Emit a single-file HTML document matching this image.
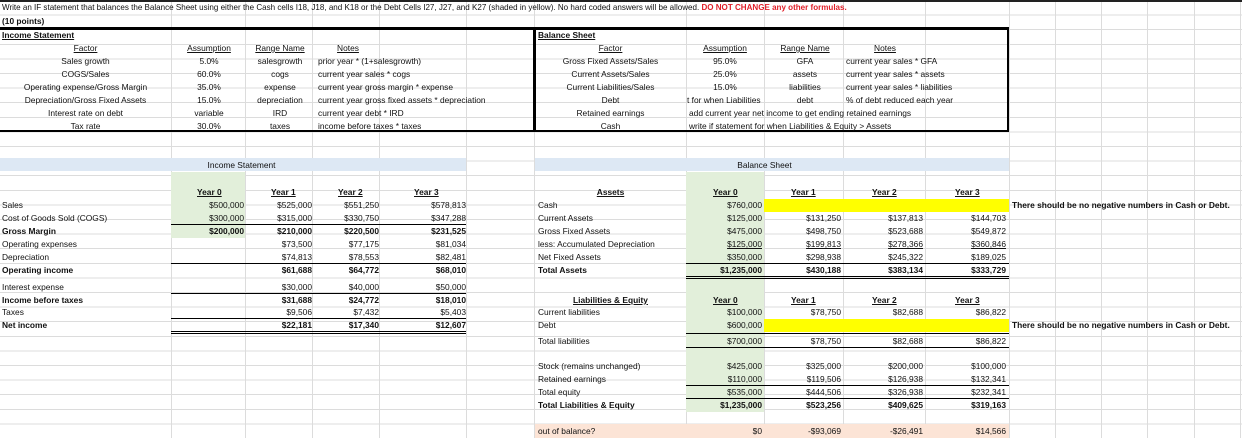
<!DOCTYPE html>
<html><head><meta charset="utf-8"><style>
*{margin:0;padding:0;box-sizing:border-box}
body{width:1242px;height:438px;overflow:hidden;background:#fff;position:relative;font-family:"Liberation Sans",Arial,sans-serif;font-size:8.4px;color:#111}
#grid{position:absolute;left:0;top:0;width:1242px;height:438px;background:repeating-linear-gradient(to bottom,transparent 0,transparent 13.6px,#dcdcdc 13.6px,#dcdcdc 14.6px);background-position:0 1px}
.v{position:absolute;top:0;height:438px;width:1px;background:#dcdcdc}
.t,.r,.c{position:absolute;line-height:12px;white-space:nowrap}
.r{text-align:right}
.c{text-align:center}
.u{text-decoration:underline}
.b{font-weight:bold}
.h{position:absolute;height:1px;background:#000}
.box{position:absolute;border:2px solid #000}
.fill{position:absolute}
</style></head><body>
<div id="grid"></div>
<div class="v" style="left:171px"></div><div class="v" style="left:245px"></div><div class="v" style="left:312px"></div><div class="v" style="left:379px"></div><div class="v" style="left:466px"></div><div class="v" style="left:534px"></div><div class="v" style="left:686px"></div><div class="v" style="left:764px"></div><div class="v" style="left:843px"></div><div class="v" style="left:925px"></div><div class="v" style="left:1009px"></div><div class="v" style="left:1055px"></div><div class="v" style="left:1101px"></div><div class="v" style="left:1147px"></div><div class="v" style="left:1194px"></div><div class="v" style="left:1240px"></div>

<div class="fill" style="left:0;top:0;width:1242px;height:2px;background:#222"></div>
<div class="fill" style="left:0;top:158px;width:466px;height:13px;background:#dde8f4"></div>
<div class="fill" style="left:535px;top:158px;width:474px;height:13px;background:#dde8f4"></div>
<div class="fill" style="left:171px;top:172px;width:74px;height:66px;background:#e2efda"></div>
<div class="fill" style="left:686px;top:172px;width:78px;height:240px;background:#e2efda"></div>
<div class="fill" style="left:764px;top:199px;width:245px;height:13px;background:#ffff00"></div>
<div class="fill" style="left:764px;top:319px;width:245px;height:13px;background:#ffff00"></div>
<div class="fill" style="left:535px;top:424px;width:474px;height:14px;background:#fce4d6"></div>

<div class="h" style="left:0;top:27px;width:1009px;height:2px"></div>
<div class="box" style="left:-2px;top:28px;width:537px;height:104px;border-left:none"></div>
<div class="box" style="left:534px;top:28px;width:475px;height:104px"></div>

<div class="t" style="left:2px;top:2px;font-size:8.05px">Write an IF statement that balances the Balance Sheet using either the Cash cells I18, J18, and K18 or the Debt Cells I27, J27, and K27 (shaded in yellow). No hard coded answers will be allowed. <span class="b" style="color:#e0202a">DO NOT CHANGE any other formulas.</span></div>
<div class="t b" style="left:2px;top:15px">(10 points)</div>
<div class="t b u" style="left:2px;top:29px">Income Statement</div>
<div class="c u" style="left:0;width:171px;top:42px">Factor</div>
<div class="c u" style="left:171px;width:76px;top:42px">Assumption</div>
<div class="c u" style="left:245px;width:70px;top:42px">Range Name</div>
<div class="c u" style="left:318px;width:60px;top:42px">Notes</div>
<div class="c" style="left:0;width:171px;top:55px">Sales growth</div>
<div class="c" style="left:0;width:171px;top:68px">COGS/Sales</div>
<div class="c" style="left:0;width:171px;top:81px">Operating expense/Gross Margin</div>
<div class="c" style="left:0;width:171px;top:94px">Depreciation/Gross Fixed Assets</div>
<div class="c" style="left:0;width:171px;top:107px">Interest rate on debt</div>
<div class="c" style="left:0;width:171px;top:120px">Tax rate</div>
<div class="c" style="left:171px;width:76px;top:55px">5.0%</div>
<div class="c" style="left:171px;width:76px;top:68px">60.0%</div>
<div class="c" style="left:171px;width:76px;top:81px">35.0%</div>
<div class="c" style="left:171px;width:76px;top:94px">15.0%</div>
<div class="c" style="left:171px;width:76px;top:107px">variable</div>
<div class="c" style="left:171px;width:76px;top:120px">30.0%</div>
<div class="c" style="left:245px;width:70px;top:55px">salesgrowth</div>
<div class="c" style="left:245px;width:70px;top:68px">cogs</div>
<div class="c" style="left:245px;width:70px;top:81px">expense</div>
<div class="c" style="left:245px;width:70px;top:94px">depreciation</div>
<div class="c" style="left:245px;width:70px;top:107px">IRD</div>
<div class="c" style="left:245px;width:70px;top:120px">taxes</div>
<div class="t" style="left:318px;top:55px">prior year * (1+salesgrowth)</div>
<div class="t" style="left:318px;top:68px">current year sales * cogs</div>
<div class="t" style="left:318px;top:81px">current year gross margin * expense</div>
<div class="t" style="left:318px;top:94px">current year gross fixed assets * depreciation</div>
<div class="t" style="left:318px;top:107px">current year debt * IRD</div>
<div class="t" style="left:318px;top:120px">income before taxes * taxes</div>

<div class="t b u" style="left:538px;top:29px">Balance Sheet</div>
<div class="c u" style="left:535px;width:151px;top:42px">Factor</div>
<div class="c u" style="left:686px;width:78px;top:42px">Assumption</div>
<div class="c u" style="left:764px;width:82px;top:42px">Range Name</div>
<div class="c u" style="left:846px;width:78px;top:42px">Notes</div>
<div class="c" style="left:535px;width:151px;top:55px">Gross Fixed Assets/Sales</div>
<div class="c" style="left:535px;width:151px;top:68px">Current Assets/Sales</div>
<div class="c" style="left:535px;width:151px;top:81px">Current Liabilities/Sales</div>
<div class="c" style="left:535px;width:151px;top:94px">Debt</div>
<div class="c" style="left:535px;width:151px;top:107px">Retained earnings</div>
<div class="c" style="left:535px;width:151px;top:120px">Cash</div>
<div class="c" style="left:686px;width:78px;top:55px">95.0%</div>
<div class="c" style="left:686px;width:78px;top:68px">25.0%</div>
<div class="c" style="left:686px;width:78px;top:81px">15.0%</div>
<div class="t" style="left:687px;top:94px;width:76px;overflow:hidden">t for when Liabilities &amp;</div>
<div class="c" style="left:764px;width:82px;top:55px">GFA</div>
<div class="c" style="left:764px;width:82px;top:68px">assets</div>
<div class="c" style="left:764px;width:82px;top:81px">liabilities</div>
<div class="c" style="left:764px;width:82px;top:94px">debt</div>
<div class="t" style="left:846px;top:55px">current year sales * GFA</div>
<div class="t" style="left:846px;top:68px">current year sales * assets</div>
<div class="t" style="left:846px;top:81px">current year sales * liabilities</div>
<div class="t" style="left:846px;top:94px">% of debt reduced each year</div>
<div class="t" style="left:689px;top:107px">add current year net income to get ending retained earnings</div>
<div class="t" style="left:689px;top:120px">write if statement for when Liabilities &amp; Equity &gt; Assets</div>

<div class="c" style="left:171px;width:141px;top:159px">Income Statement</div>
<div class="t b u" style="left:197px;top:186px">Year 0</div>
<div class="t b u" style="left:271px;top:186px">Year 1</div>
<div class="t b u" style="left:338px;top:186px">Year 2</div>
<div class="t b u" style="left:414px;top:186px">Year 3</div>
<div class="t" style="left:2px;top:199px">Sales</div>
<div class="t" style="left:2px;top:212px">Cost of Goods Sold (COGS)</div>
<div class="t b" style="left:2px;top:225px">Gross Margin</div>
<div class="t" style="left:2px;top:238px">Operating expenses</div>
<div class="t" style="left:2px;top:251px">Depreciation</div>
<div class="t b" style="left:2px;top:264px">Operating income</div>
<div class="t" style="left:2px;top:281px">Interest expense</div>
<div class="t b" style="left:2px;top:294px">Income before taxes</div>
<div class="t" style="left:2px;top:306px">Taxes</div>
<div class="t b" style="left:2px;top:319px">Net income</div>

<div class="r" style="right:998px;top:199px">$500,000</div>
<div class="r" style="right:998px;top:212px">$300,000</div>
<div class="r b" style="right:998px;top:225px">$200,000</div>

<div class="r" style="right:930px;top:199px">$525,000</div>
<div class="r" style="right:930px;top:212px">$315,000</div>
<div class="r b" style="right:930px;top:225px">$210,000</div>
<div class="r" style="right:930px;top:238px">$73,500</div>
<div class="r" style="right:930px;top:251px">$74,813</div>
<div class="r b" style="right:930px;top:264px">$61,688</div>
<div class="r" style="right:930px;top:281px">$30,000</div>
<div class="r b" style="right:930px;top:294px">$31,688</div>
<div class="r" style="right:930px;top:306px">$9,506</div>
<div class="r b" style="right:930px;top:319px">$22,181</div>

<div class="r" style="right:863px;top:199px">$551,250</div>
<div class="r" style="right:863px;top:212px">$330,750</div>
<div class="r b" style="right:863px;top:225px">$220,500</div>
<div class="r" style="right:863px;top:238px">$77,175</div>
<div class="r" style="right:863px;top:251px">$78,553</div>
<div class="r b" style="right:863px;top:264px">$64,772</div>
<div class="r" style="right:863px;top:281px">$40,000</div>
<div class="r b" style="right:863px;top:294px">$24,772</div>
<div class="r" style="right:863px;top:306px">$7,432</div>
<div class="r b" style="right:863px;top:319px">$17,340</div>

<div class="r" style="right:776px;top:199px">$578,813</div>
<div class="r" style="right:776px;top:212px">$347,288</div>
<div class="r b" style="right:776px;top:225px">$231,525</div>
<div class="r" style="right:776px;top:238px">$81,034</div>
<div class="r" style="right:776px;top:251px">$82,481</div>
<div class="r b" style="right:776px;top:264px">$68,010</div>
<div class="r" style="right:776px;top:281px">$50,000</div>
<div class="r b" style="right:776px;top:294px">$18,010</div>
<div class="r" style="right:776px;top:306px">$5,403</div>
<div class="r b" style="right:776px;top:319px">$12,607</div>

<div class="h" style="left:171px;top:224px;width:295px"></div>
<div class="h" style="left:171px;top:263px;width:295px"></div>
<div class="h" style="left:171px;top:293px;width:295px"></div>
<div class="h" style="left:171px;top:318px;width:295px"></div>
<div class="h" style="left:171px;top:331px;width:295px"></div>
<div class="h" style="left:171px;top:333px;width:295px"></div>

<div class="c" style="left:686px;width:157px;top:159px">Balance Sheet</div>
<div class="c b u" style="left:535px;width:151px;top:186px">Assets</div>
<div class="t b u" style="left:713px;top:186px">Year 0</div>
<div class="t b u" style="left:791px;top:186px">Year 1</div>
<div class="t b u" style="left:872px;top:186px">Year 2</div>
<div class="t b u" style="left:955px;top:186px">Year 3</div>
<div class="t" style="left:538px;top:199px">Cash</div>
<div class="t" style="left:538px;top:212px">Current Assets</div>
<div class="t" style="left:538px;top:225px">Gross Fixed Assets</div>
<div class="t" style="left:538px;top:238px">less: Accumulated Depreciation</div>
<div class="t" style="left:538px;top:251px">Net Fixed Assets</div>
<div class="t b" style="left:538px;top:264px">Total Assets</div>

<div class="r" style="right:480px;top:199px">$760,000</div>
<div class="r" style="right:480px;top:212px">$125,000</div>
<div class="r" style="right:480px;top:225px">$475,000</div>
<div class="r u" style="right:480px;top:238px">$125,000</div>
<div class="r" style="right:480px;top:251px">$350,000</div>
<div class="r b" style="right:480px;top:264px">$1,235,000</div>
<div class="r" style="right:401px;top:212px">$131,250</div>
<div class="r" style="right:401px;top:225px">$498,750</div>
<div class="r u" style="right:401px;top:238px">$199,813</div>
<div class="r" style="right:401px;top:251px">$298,938</div>
<div class="r b" style="right:401px;top:264px">$430,188</div>
<div class="r" style="right:319px;top:212px">$137,813</div>
<div class="r" style="right:319px;top:225px">$523,688</div>
<div class="r u" style="right:319px;top:238px">$278,366</div>
<div class="r" style="right:319px;top:251px">$245,322</div>
<div class="r b" style="right:319px;top:264px">$383,134</div>
<div class="r" style="right:236px;top:212px">$144,703</div>
<div class="r" style="right:236px;top:225px">$549,872</div>
<div class="r u" style="right:236px;top:238px">$360,846</div>
<div class="r" style="right:236px;top:251px">$189,025</div>
<div class="r b" style="right:236px;top:264px">$333,729</div>
<div class="h" style="left:686px;top:263px;width:323px"></div>
<div class="h" style="left:686px;top:276px;width:323px"></div>
<div class="h" style="left:686px;top:278px;width:323px"></div>

<div class="t b" style="left:1012px;top:199px">There should be no negative numbers in Cash or Debt.</div>
<div class="t b" style="left:1012px;top:319px">There should be no negative numbers in Cash or Debt.</div>

<div class="c b u" style="left:535px;width:151px;top:294px">Liabilities &amp; Equity</div>
<div class="t b u" style="left:713px;top:294px">Year 0</div>
<div class="t b u" style="left:791px;top:294px">Year 1</div>
<div class="t b u" style="left:872px;top:294px">Year 2</div>
<div class="t b u" style="left:955px;top:294px">Year 3</div>
<div class="t" style="left:538px;top:306px">Current liabilities</div>
<div class="t" style="left:538px;top:319px">Debt</div>
<div class="t" style="left:538px;top:335px">Total liabilities</div>
<div class="t" style="left:538px;top:360px">Stock (remains unchanged)</div>
<div class="t" style="left:538px;top:373px">Retained earnings</div>
<div class="t" style="left:538px;top:386px">Total equity</div>
<div class="t b" style="left:538px;top:399px">Total Liabilities &amp; Equity</div>
<div class="t" style="left:538px;top:425px">out of balance?</div>

<div class="r" style="right:480px;top:306px">$100,000</div>
<div class="r" style="right:480px;top:319px">$600,000</div>
<div class="r" style="right:480px;top:335px">$700,000</div>
<div class="r" style="right:480px;top:360px">$425,000</div>
<div class="r" style="right:480px;top:373px">$110,000</div>
<div class="r" style="right:480px;top:386px">$535,000</div>
<div class="r b" style="right:480px;top:399px">$1,235,000</div>
<div class="r" style="right:480px;top:425px">$0</div>

<div class="r" style="right:401px;top:306px">$78,750</div>
<div class="r" style="right:401px;top:335px">$78,750</div>
<div class="r" style="right:401px;top:360px">$325,000</div>
<div class="r" style="right:401px;top:373px">$119,506</div>
<div class="r" style="right:401px;top:386px">$444,506</div>
<div class="r b" style="right:401px;top:399px">$523,256</div>
<div class="r" style="right:401px;top:425px">-$93,069</div>

<div class="r" style="right:319px;top:306px">$82,688</div>
<div class="r" style="right:319px;top:335px">$82,688</div>
<div class="r" style="right:319px;top:360px">$200,000</div>
<div class="r" style="right:319px;top:373px">$126,938</div>
<div class="r" style="right:319px;top:386px">$326,938</div>
<div class="r b" style="right:319px;top:399px">$409,625</div>
<div class="r" style="right:319px;top:425px">-$26,491</div>

<div class="r" style="right:236px;top:306px">$86,822</div>
<div class="r" style="right:236px;top:335px">$86,822</div>
<div class="r" style="right:236px;top:360px">$100,000</div>
<div class="r" style="right:236px;top:373px">$132,341</div>
<div class="r" style="right:236px;top:386px">$232,341</div>
<div class="r b" style="right:236px;top:399px">$319,163</div>
<div class="r" style="right:236px;top:425px">$14,566</div>

<div class="h" style="left:686px;top:333px;width:323px"></div>
<div class="h" style="left:686px;top:347px;width:323px"></div>
<div class="h" style="left:686px;top:385px;width:323px"></div>
<div class="h" style="left:686px;top:398px;width:323px"></div>
</body></html>
